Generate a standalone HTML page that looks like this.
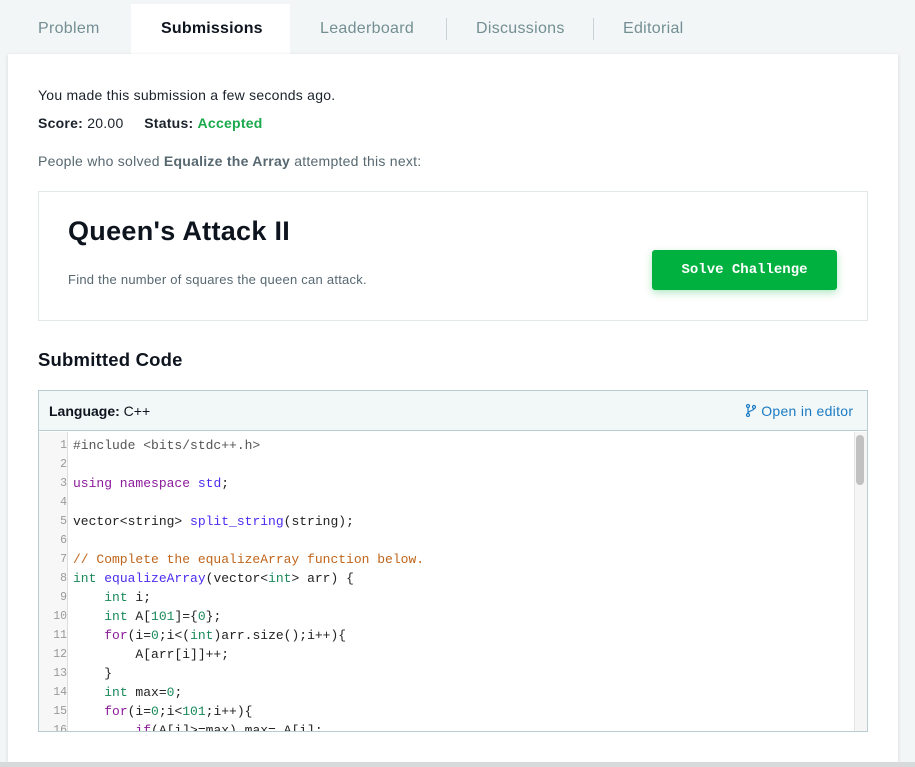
<!DOCTYPE html>
<html><head><meta charset="utf-8"><style>
*{margin:0;padding:0;box-sizing:border-box}
body{width:915px;height:767px;background:#f3f6f7;font-family:"Liberation Sans",sans-serif;position:relative;overflow:hidden}
.a{position:absolute;white-space:nowrap}
.tab{position:absolute;top:20px;font-size:16px;color:#738f93;letter-spacing:.3px}
.sep{position:absolute;top:18px;width:1px;height:22px;background:#c9d3d5}
#card{position:absolute;left:8px;top:54px;width:890px;height:708px;background:#fff;box-shadow:0 1px 4px rgba(0,0,0,.12)}
#bottom{position:absolute;left:0;top:762px;width:915px;height:5px;background:#d6dadb}
.ln{position:absolute;left:0;width:28px;text-align:right;color:#999;font-family:"Liberation Mono",monospace;font-size:11.5px}
.cl{position:absolute;left:34px;color:#222;font-family:"Liberation Mono",monospace;font-size:13px;white-space:pre}
.k{color:#8b1a9a}.t{color:#1a8a5a}.f{color:#4a2df0}.c{color:#c0651c}.n{color:#1a8a5a}.g{color:#555}
.sp{letter-spacing:.25px}
</style></head><body>
<div class="a" style="left:131px;top:4px;width:159px;height:52px;background:#fff"></div>
<div class="tab" style="left:38px">Problem</div>
<div class="tab" style="left:161px;color:#0e141e;font-weight:bold;letter-spacing:.2px">Submissions</div>
<div class="tab" style="left:320px">Leaderboard</div>
<div class="sep" style="left:446px"></div>
<div class="tab" style="left:476px">Discussions</div>
<div class="sep" style="left:593px"></div>
<div class="tab" style="left:623px">Editorial</div>
<div id="card"></div>
<div id="bottom"></div>
<div class="a sp" style="left:38px;top:87px;font-size:14px;color:#1b222b">You made this submission a few seconds ago.</div>
<div class="a sp" style="left:38px;top:115px;font-size:14px;color:#1b222b"><b>Score:</b> 20.00 &nbsp;&nbsp;&nbsp;&nbsp;<b>Status:</b> <b style="color:#1ba94c">Accepted</b></div>
<div class="a sp" style="left:38px;top:153px;font-size:14px;color:#576871">People who solved <b>Equalize the Array</b> attempted this next:</div>
<div class="a" style="left:38px;top:191px;width:830px;height:130px;border:1px solid #e3e9ea"></div>
<div class="a" style="left:68px;top:216px;font-size:27px;font-weight:bold;color:#0e141e;letter-spacing:.3px">Queen's Attack II</div>
<div class="a sp" style="left:68px;top:272px;font-size:13px;color:#576871">Find the number of squares the queen can attack.</div>
<div class="a" style="left:652px;top:250px;width:185px;height:40px;background:#00b140;border-radius:3px;box-shadow:0 3px 8px rgba(0,177,64,.3);color:#fff;font-family:'Liberation Mono',monospace;font-weight:bold;font-size:14px;text-align:center;line-height:40px">Solve Challenge</div>
<div class="a" style="left:38px;top:349px;font-size:18.5px;font-weight:bold;color:#0e141e;letter-spacing:.2px">Submitted Code</div>
<div class="a" style="left:38px;top:390px;width:830px;height:342px;border:1px solid #b8ccd1;background:#fff;overflow:hidden">
 <div style="position:absolute;left:0;top:0;width:828px;height:40px;background:#f2f7f7;border-bottom:1px solid #b8ccd1"></div>
 <div class="a" style="left:10px;top:12px;font-size:14px;color:#0e141e"><b>Language:</b> C++</div>
 <div class="a" style="left:706px;top:12px;font-size:14px;color:#1a7bc4;letter-spacing:.3px"><svg width="12" height="13" viewBox="0 0 12 13" style="vertical-align:-1px"><g fill="none" stroke="#1a7bc4" stroke-width="1.2"><circle cx="3" cy="2" r="1.5"/><circle cx="3" cy="11" r="1.5"/><circle cx="9" cy="3" r="1.5"/><path d="M3 3.5V9.5M9 4.5C9 7 3 6.5 3 9.5"/></g></svg> Open in editor</div>
 <div style="position:absolute;left:0;top:41px;width:29px;height:301px;background:#f7f7f7;border-right:1px solid #ddd"></div>
 <div style="position:absolute;left:815px;top:41px;width:13px;height:300px;background:#f5f5f5;border-left:1px solid #e5e5e5"></div>
 <div style="position:absolute;left:817px;top:44px;width:8px;height:50px;background:#c1c1c1;border-radius:4px"></div>
 <div style="position:absolute;left:0;top:48px">
  <div class="ln" style="top:0">1</div><div class="cl g" style="top:-1px">#include &lt;bits/stdc++.h&gt;</div>
  <div class="ln" style="top:19px">2</div>
  <div class="ln" style="top:38px">3</div><div class="cl" style="top:37px"><span class="k">using namespace</span> <span class="f">std</span>;</div>
  <div class="ln" style="top:57px">4</div>
  <div class="ln" style="top:76px">5</div><div class="cl" style="top:75px">vector&lt;string&gt; <span class="f">split_string</span>(string);</div>
  <div class="ln" style="top:95px">6</div>
  <div class="ln" style="top:114px">7</div><div class="cl c" style="top:113px">// Complete the equalizeArray function below.</div>
  <div class="ln" style="top:133px">8</div><div class="cl" style="top:132px"><span class="t">int</span> <span class="f">equalizeArray</span>(vector&lt;<span class="t">int</span>&gt; arr) {</div>
  <div class="ln" style="top:152px">9</div><div class="cl" style="top:151px">    <span class="t">int</span> i;</div>
  <div class="ln" style="top:171px">10</div><div class="cl" style="top:170px">    <span class="t">int</span> A[<span class="n">101</span>]={<span class="n">0</span>};</div>
  <div class="ln" style="top:190px">11</div><div class="cl" style="top:189px">    <span class="k">for</span>(i=<span class="n">0</span>;i&lt;(<span class="t">int</span>)arr.size();i++){</div>
  <div class="ln" style="top:209px">12</div><div class="cl" style="top:208px">        A[arr[i]]++;</div>
  <div class="ln" style="top:228px">13</div><div class="cl" style="top:227px">    }</div>
  <div class="ln" style="top:247px">14</div><div class="cl" style="top:246px">    <span class="t">int</span> max=<span class="n">0</span>;</div>
  <div class="ln" style="top:266px">15</div><div class="cl" style="top:265px">    <span class="k">for</span>(i=<span class="n">0</span>;i&lt;<span class="n">101</span>;i++){</div>
  <div class="ln" style="top:285px">16</div><div class="cl" style="top:284px">        <span class="k">if</span>(A[i]&gt;=max) max= A[i];</div>
 </div>
</div>
</body></html>
